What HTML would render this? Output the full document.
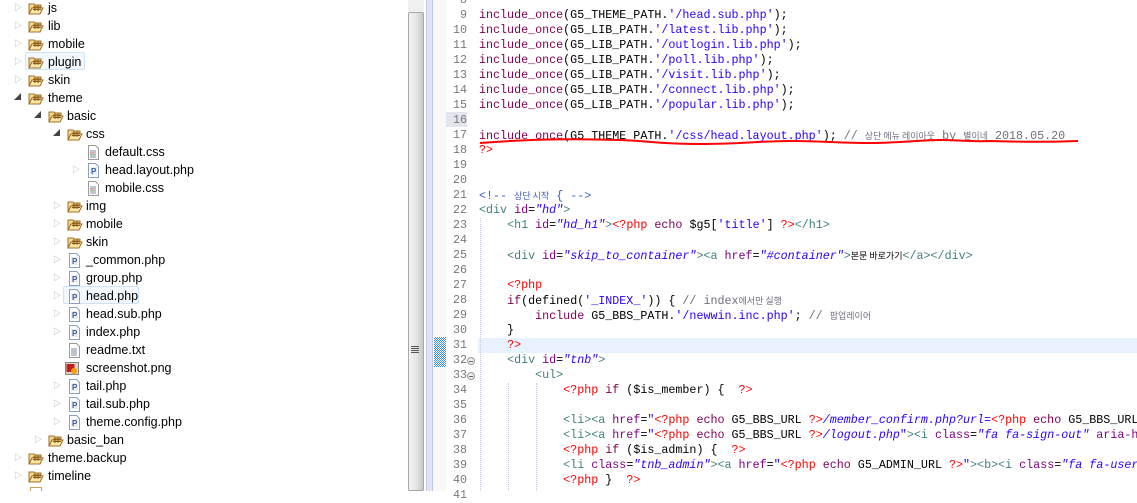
<!DOCTYPE html>
<html><head><meta charset="utf-8"><style>
*{margin:0;padding:0;box-sizing:border-box}
body{width:1137px;height:491px;overflow:hidden;background:#fff;position:relative;font-family:"Liberation Sans","Noto Sans CJK KR",sans-serif}
.r{position:absolute;height:18px;line-height:18px;font-size:12.5px;color:#000;white-space:nowrap}
.r svg{position:absolute;top:2px}
.ar{position:absolute;top:0;font-size:8px;color:#aaa}
.sel{position:absolute;border:1px solid #cde3f7;background:#f2f8fe;border-radius:2px;height:18px}
.code{position:absolute;left:479px;font-family:"Liberation Mono","Noto Sans CJK KR",monospace;font-size:11.7px;height:15px;line-height:15px;white-space:pre;color:#000}
.ln{position:absolute;left:440px;width:27px;text-align:right;font-family:"Liberation Mono",monospace;font-size:11.7px;height:15px;line-height:15px;color:#787878}
.k{color:#7f0055}.s{color:#2a00ff}.t{color:#f00}.g{color:#3f7f7f}.a{color:#7f007f}.v{color:#2a00ff;font-style:italic}.c{color:#6f6f7f}.hc{color:#3f5fbf}
.kr{font-family:"Noto Sans CJK KR",sans-serif;font-size:9px}
</style></head><body>
<svg width="0" height="0" style="position:absolute">
<defs>
<g id="fo"><path d="M1 3h5l1 1h6v3H4L1 13z" fill="#f6d98a" stroke="#a0702a" stroke-width="1"/><path d="M1 13l3-6h11l-3 6z" fill="#fbe6a6" stroke="#a0702a"/><path d="M7 4v6M10 4v6M5 6h8M5 8.5h8" stroke="#8a5a1a" stroke-width="1"/></g>
<g id="ph"><path d="M2.5 .5h7l3 3v11h-10z" fill="#fff" stroke="#8aa0c0"/><rect x="4" y="4" width="7" height="8" fill="#e8eef8"/><text x="5" y="11" font-size="8" font-family="Liberation Sans" font-weight="bold" fill="#3a5a9a">P</text></g>
<g id="cs"><path d="M2.5 .5h7l3 3v11h-10z" fill="#fff" stroke="#9a9a9a"/><path d="M4 6h6M4 8h6M4 10h6M4 12h6" stroke="#7a8aa0"/><path d="M4 8h3" stroke="#c44"/><path d="M4 10h3" stroke="#4a4"/></g>
<g id="tx"><path d="M2.5 .5h7l3 3v11h-10z" fill="#fff" stroke="#9a9a9a"/><path d="M4 6h6M4 8h6M4 10h6M4 12h6" stroke="#7a8aa0"/></g>
<g id="pn"><rect x=".5" y="1.5" width="13" height="12" fill="#e0d0c0" stroke="#888"/><rect x="1.5" y="3" width="8" height="8" fill="#c02020"/><circle cx="9" cy="10" r="3" fill="#f0a000"/></g>
</defs></svg>

<div class="sel" style="left:25px;top:52px;width:60px"></div>
<div class="sel" style="left:63px;top:286px;width:76px"></div>

<div class="r" style="top:-1px;left:0"><span class="ar" style="left:14px">▷</span><svg style="left:28px" width="16" height="15"><use href="#fo"/></svg><span style="position:absolute;left:48px">js</span></div>
<div class="r" style="top:17px;left:0"><span class="ar" style="left:14px">▷</span><svg style="left:28px" width="16" height="15"><use href="#fo"/></svg><span style="position:absolute;left:48px">lib</span></div>
<div class="r" style="top:35px;left:0"><span class="ar" style="left:14px">▷</span><svg style="left:28px" width="16" height="15"><use href="#fo"/></svg><span style="position:absolute;left:48px">mobile</span></div>
<div class="r" style="top:53px;left:0"><span class="ar" style="left:14px">▷</span><svg style="left:28px" width="16" height="15"><use href="#fo"/></svg><span style="position:absolute;left:48px">plugin</span></div>
<div class="r" style="top:71px;left:0"><span class="ar" style="left:14px">▷</span><svg style="left:28px" width="16" height="15"><use href="#fo"/></svg><span style="position:absolute;left:48px">skin</span></div>
<div class="r" style="top:89px;left:0"><span class="ar" style="left:14px;color:#444;font-size:7px">◢</span><svg style="left:28px" width="16" height="15"><use href="#fo"/></svg><span style="position:absolute;left:48px">theme</span></div>
<div class="r" style="top:107px;left:0"><span class="ar" style="left:34px;color:#444;font-size:7px">◢</span><svg style="left:48px" width="16" height="15"><use href="#fo"/></svg><span style="position:absolute;left:67px">basic</span></div>
<div class="r" style="top:125px;left:0"><span class="ar" style="left:53px;color:#444;font-size:7px">◢</span><svg style="left:67px" width="16" height="15"><use href="#fo"/></svg><span style="position:absolute;left:86px">css</span></div>
<div class="r" style="top:143px;left:0"><svg style="left:86px" width="15" height="15"><use href="#cs"/></svg><span style="position:absolute;left:105px">default.css</span></div>
<div class="r" style="top:161px;left:0"><span class="ar" style="left:72px">▷</span><svg style="left:86px" width="15" height="15"><use href="#ph"/></svg><span style="position:absolute;left:105px">head.layout.php</span></div>
<div class="r" style="top:179px;left:0"><svg style="left:86px" width="15" height="15"><use href="#cs"/></svg><span style="position:absolute;left:105px">mobile.css</span></div>
<div class="r" style="top:197px;left:0"><span class="ar" style="left:53px">▷</span><svg style="left:67px" width="16" height="15"><use href="#fo"/></svg><span style="position:absolute;left:86px">img</span></div>
<div class="r" style="top:215px;left:0"><span class="ar" style="left:53px">▷</span><svg style="left:67px" width="16" height="15"><use href="#fo"/></svg><span style="position:absolute;left:86px">mobile</span></div>
<div class="r" style="top:233px;left:0"><span class="ar" style="left:53px">▷</span><svg style="left:67px" width="16" height="15"><use href="#fo"/></svg><span style="position:absolute;left:86px">skin</span></div>
<div class="r" style="top:251px;left:0"><span class="ar" style="left:53px">▷</span><svg style="left:67px" width="15" height="15"><use href="#ph"/></svg><span style="position:absolute;left:86px">_common.php</span></div>
<div class="r" style="top:269px;left:0"><span class="ar" style="left:53px">▷</span><svg style="left:67px" width="15" height="15"><use href="#ph"/></svg><span style="position:absolute;left:86px">group.php</span></div>
<div class="r" style="top:287px;left:0"><span class="ar" style="left:53px">▷</span><svg style="left:67px" width="15" height="15"><use href="#ph"/></svg><span style="position:absolute;left:86px">head.php</span></div>
<div class="r" style="top:305px;left:0"><span class="ar" style="left:53px">▷</span><svg style="left:67px" width="15" height="15"><use href="#ph"/></svg><span style="position:absolute;left:86px">head.sub.php</span></div>
<div class="r" style="top:323px;left:0"><span class="ar" style="left:53px">▷</span><svg style="left:67px" width="15" height="15"><use href="#ph"/></svg><span style="position:absolute;left:86px">index.php</span></div>
<div class="r" style="top:341px;left:0"><svg style="left:67px" width="15" height="15"><use href="#tx"/></svg><span style="position:absolute;left:86px">readme.txt</span></div>
<div class="r" style="top:359px;left:0"><svg style="left:65px" width="15" height="15"><use href="#pn"/></svg><span style="position:absolute;left:86px">screenshot.png</span></div>
<div class="r" style="top:377px;left:0"><span class="ar" style="left:53px">▷</span><svg style="left:67px" width="15" height="15"><use href="#ph"/></svg><span style="position:absolute;left:86px">tail.php</span></div>
<div class="r" style="top:395px;left:0"><span class="ar" style="left:53px">▷</span><svg style="left:67px" width="15" height="15"><use href="#ph"/></svg><span style="position:absolute;left:86px">tail.sub.php</span></div>
<div class="r" style="top:413px;left:0"><span class="ar" style="left:53px">▷</span><svg style="left:67px" width="15" height="15"><use href="#ph"/></svg><span style="position:absolute;left:86px">theme.config.php</span></div>
<div class="r" style="top:431px;left:0"><span class="ar" style="left:34px">▷</span><svg style="left:48px" width="16" height="15"><use href="#fo"/></svg><span style="position:absolute;left:67px">basic_ban</span></div>
<div class="r" style="top:449px;left:0"><span class="ar" style="left:14px">▷</span><svg style="left:28px" width="16" height="15"><use href="#fo"/></svg><span style="position:absolute;left:48px">theme.backup</span></div>
<div class="r" style="top:467px;left:0"><span class="ar" style="left:14px">▷</span><svg style="left:28px" width="16" height="15"><use href="#fo"/></svg><span style="position:absolute;left:48px">timeline</span></div>
<div style="position:absolute;left:30px;top:487px;width:12px;height:4px;border:1px solid #c9a060;border-bottom:none"></div>

<div style="position:absolute;left:408px;top:0;width:16px;height:491px;background:#f0f0f0"></div>
<div style="position:absolute;left:408px;top:12px;width:16px;height:479px;border:1px solid #a8a8a8;border-radius:2px;background:linear-gradient(90deg,#f4f4f4,#e6e6e6 50%,#c8c8c8)"></div>
<div style="position:absolute;left:411px;top:346px;width:8px;height:1px;background:#555;box-shadow:0 2px 0 #555,0 4px 0 #555,0 6px 0 #555"></div>
<div style="position:absolute;left:426px;top:0;width:7px;height:491px;background:#dfe4f4;border-left:1px solid #c0c8e0;border-right:1px solid #c0c8e0"></div>
<div style="position:absolute;left:433px;top:0;width:14px;height:491px;background:#f8f8f8"></div>
<div style="position:absolute;left:434px;top:337px;width:12px;height:30px;background:repeating-conic-gradient(#3d8ef0 0 25%,#fff 0 50%) 0 0/2px 2px"></div>
<div style="position:absolute;left:446px;top:0;width:27px;height:491px;background:#fff"></div>
<div style="position:absolute;left:446px;top:112px;width:21px;height:15px;background:#e4e4ee"></div>
<div style="position:absolute;left:478px;top:338px;width:659px;height:15px;background:#e8f2fe"></div>

<div class="ln" style="top:-7px">8</div>
<div class="ln" style="top:8px">9</div><div class="ln" style="top:23px">10</div><div class="ln" style="top:38px">11</div><div class="ln" style="top:53px">12</div><div class="ln" style="top:68px">13</div><div class="ln" style="top:83px">14</div><div class="ln" style="top:98px">15</div><div class="ln" style="top:113px">16</div><div class="ln" style="top:128px">17</div><div class="ln" style="top:143px">18</div><div class="ln" style="top:158px">19</div><div class="ln" style="top:173px">20</div><div class="ln" style="top:188px">21</div><div class="ln" style="top:203px">22</div><div class="ln" style="top:218px">23</div><div class="ln" style="top:233px">24</div><div class="ln" style="top:248px">25</div><div class="ln" style="top:263px">26</div><div class="ln" style="top:278px">27</div><div class="ln" style="top:293px">28</div><div class="ln" style="top:308px">29</div><div class="ln" style="top:323px">30</div><div class="ln" style="top:338px">31</div><div class="ln" style="top:353px">32</div><div class="ln" style="top:368px">33</div><div class="ln" style="top:383px">34</div><div class="ln" style="top:398px">35</div><div class="ln" style="top:413px">36</div><div class="ln" style="top:428px">37</div><div class="ln" style="top:443px">38</div><div class="ln" style="top:458px">39</div><div class="ln" style="top:473px">40</div><div class="ln" style="top:488px">41</div>
<div style="position:absolute;left:467px;top:357px;width:8px;height:8px;border:1px solid #999;border-radius:50%;background:#eee"></div>
<div style="position:absolute;left:469px;top:361px;width:4px;height:1px;background:#666"></div>
<div style="position:absolute;left:467px;top:372px;width:8px;height:8px;border:1px solid #999;border-radius:50%;background:#eee"></div>
<div style="position:absolute;left:469px;top:376px;width:4px;height:1px;background:#666"></div>

<div class="code" style="top:8px"><span class="k">include_once</span>(G5_THEME_PATH.<span class="s">'/head.sub.php'</span>);</div>
<div class="code" style="top:23px"><span class="k">include_once</span>(G5_LIB_PATH.<span class="s">'/latest.lib.php'</span>);</div>
<div class="code" style="top:38px"><span class="k">include_once</span>(G5_LIB_PATH.<span class="s">'/outlogin.lib.php'</span>);</div>
<div class="code" style="top:53px"><span class="k">include_once</span>(G5_LIB_PATH.<span class="s">'/poll.lib.php'</span>);</div>
<div class="code" style="top:68px"><span class="k">include_once</span>(G5_LIB_PATH.<span class="s">'/visit.lib.php'</span>);</div>
<div class="code" style="top:83px"><span class="k">include_once</span>(G5_LIB_PATH.<span class="s">'/connect.lib.php'</span>);</div>
<div class="code" style="top:98px"><span class="k">include_once</span>(G5_LIB_PATH.<span class="s">'/popular.lib.php'</span>);</div>
<div class="code" style="top:128px"><span class="k">include_once</span>(G5_THEME_PATH.<span class="s">'/css/head.layout.php'</span>); <span class="c">// <span class="kr">상단 메뉴 레이아웃</span> by <span class="kr">별이네</span> 2018.05.20</span></div>
<div class="code" style="top:143px"><span class="t">?&gt;</span></div>
<div class="code" style="top:188px"><span class="hc">&lt;!-- <span class="kr">상단 시작</span> { --&gt;</span></div>
<div class="code" style="top:203px"><span class="g">&lt;div </span><span class="a">id</span>=<span class="v">"hd"</span><span class="g">&gt;</span></div>
<div class="code" style="top:218px">    <span class="g">&lt;h1 </span><span class="a">id</span>=<span class="v">"hd_h1"</span><span class="g">&gt;</span><span class="t">&lt;?php</span> <span class="k">echo</span> $g5[<span class="s">'title'</span>] <span class="t">?&gt;</span><span class="g">&lt;/h1&gt;</span></div>
<div class="code" style="top:248px">    <span class="g">&lt;div </span><span class="a">id</span>=<span class="v">"skip_to_container"</span><span class="g">&gt;&lt;a </span><span class="a">href</span>=<span class="v">"#container"</span><span class="g">&gt;</span><span class="kr">본문 바로가기</span><span class="g">&lt;/a&gt;&lt;/div&gt;</span></div>
<div class="code" style="top:278px">    <span class="t">&lt;?php</span></div>
<div class="code" style="top:293px">    <span class="k">if</span>(defined(<span class="s">'_INDEX_'</span>)) { <span class="c">// index<span class="kr">에서만 실행</span></span></div>
<div class="code" style="top:308px">        <span class="k">include</span> G5_BBS_PATH.<span class="s">'/newwin.inc.php'</span>; <span class="c">// <span class="kr">팝업레이어</span></span></div>
<div class="code" style="top:323px">    }</div>
<div class="code" style="top:338px">    <span class="t">?&gt;</span></div>
<div class="code" style="top:353px">    <span class="g">&lt;div </span><span class="a">id</span>=<span class="v">"tnb"</span><span class="g">&gt;</span></div>
<div class="code" style="top:368px">        <span class="g">&lt;ul&gt;</span></div>
<div class="code" style="top:383px">            <span class="t">&lt;?php</span> <span class="k">if</span> ($is_member) {  <span class="t">?&gt;</span></div>
<div class="code" style="top:413px">            <span class="g">&lt;li&gt;&lt;a </span><span class="a">href</span>=<span class="s">"</span><span class="t">&lt;?php</span> <span class="k">echo</span> G5_BBS_URL <span class="t">?&gt;</span><span class="v">/member_confirm.php?url=</span><span class="t">&lt;?php</span> <span class="k">echo</span> G5_BBS_URL</div>
<div class="code" style="top:428px">            <span class="g">&lt;li&gt;&lt;a </span><span class="a">href</span>=<span class="s">"</span><span class="t">&lt;?php</span> <span class="k">echo</span> G5_BBS_URL <span class="t">?&gt;</span><span class="v">/logout.php</span><span class="s">"</span><span class="g">&gt;&lt;i </span><span class="a">class</span>=<span class="v">"fa fa-sign-out"</span> <span class="a">aria-h</span></div>
<div class="code" style="top:443px">            <span class="t">&lt;?php</span> <span class="k">if</span> ($is_admin) {  <span class="t">?&gt;</span></div>
<div class="code" style="top:458px">            <span class="g">&lt;li </span><span class="a">class</span>=<span class="v">"tnb_admin"</span><span class="g">&gt;&lt;a </span><span class="a">href</span>=<span class="s">"</span><span class="t">&lt;?php</span> <span class="k">echo</span> G5_ADMIN_URL <span class="t">?&gt;</span><span class="s">"</span><span class="g">&gt;&lt;b&gt;&lt;i </span><span class="a">class</span>=<span class="v">"fa fa-user</span></div>
<div class="code" style="top:473px">            <span class="t">&lt;?php</span> }  <span class="t">?&gt;</span></div>

<div style="position:absolute;left:480px;top:218px;width:0;height:273px;border-left:1px dotted #c8c8e0"></div>
<div style="position:absolute;left:508px;top:383px;width:0;height:108px;border-left:1px dotted #c8c8e0"></div>
<div style="position:absolute;left:536px;top:383px;width:0;height:108px;border-left:1px dotted #c8c8e0"></div>

<svg style="position:absolute;left:0;top:0" width="1137" height="491"><path d="M480 143 C520 140 560 138 620 140 C650 141 660 144 700 144 C740 144 760 141 790 141 C820 141 840 143 870 143 C900 143 920 140 940 140 C960 140 970 142 990 141 C1020 142 1050 142 1078 141" fill="none" stroke="#f00" stroke-width="2"/></svg>
</body></html>
